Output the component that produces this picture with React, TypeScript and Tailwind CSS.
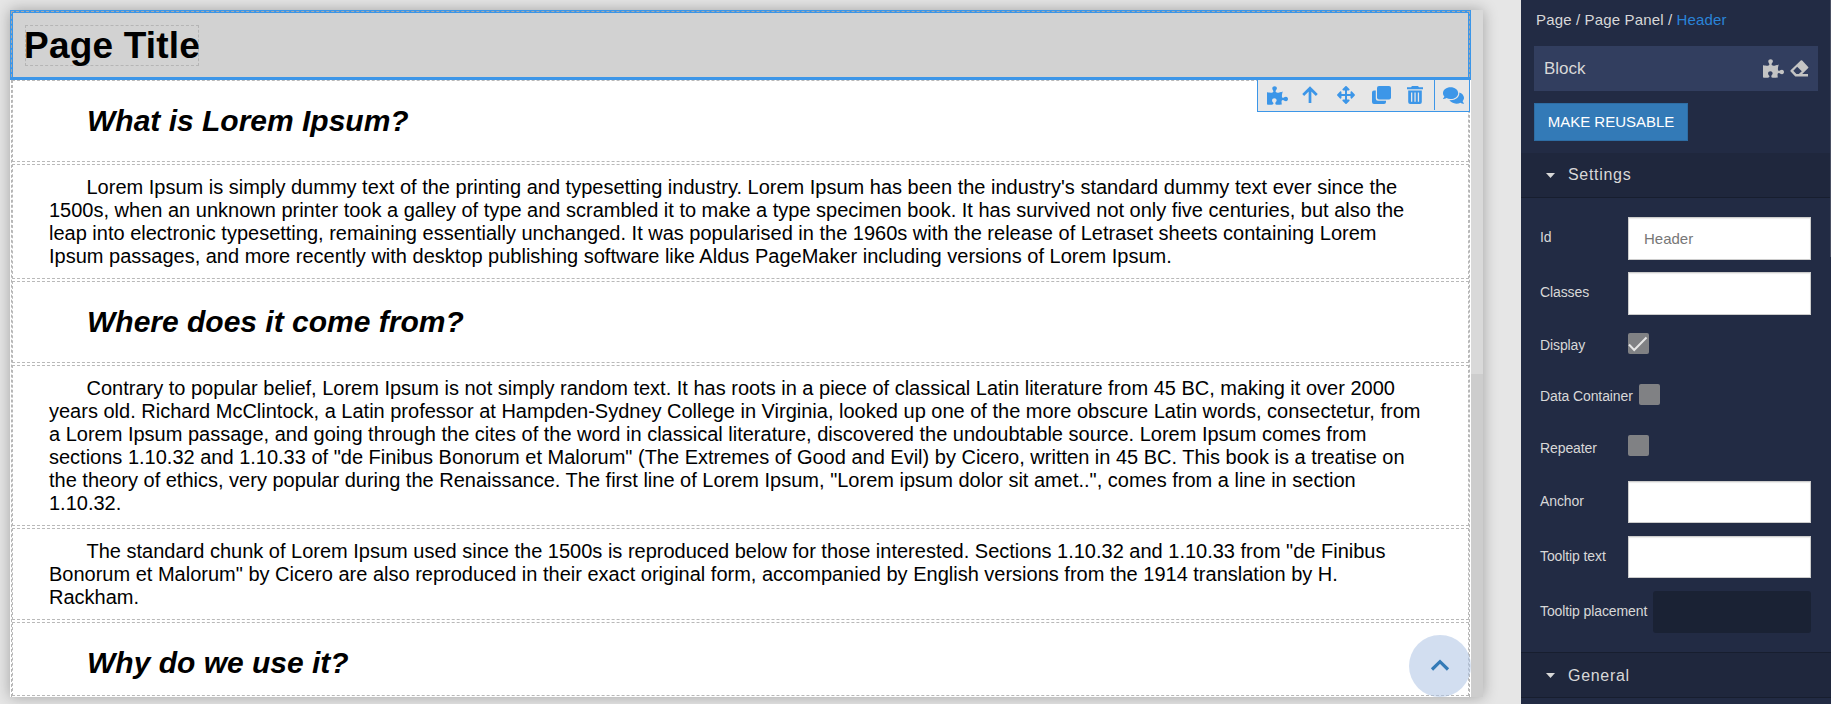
import React from "react";
import { FaPuzzlePiece, FaArrowsAlt, FaComments } from "react-icons/fa";

function Heading({ children, className }: { children: React.ReactNode; className: string }) {
  return (
    <div className={`border border-dashed border-[#b9b9b9] pt-[23px] pl-[74px] ${className}`}>
      <h2 className="text-[30px] leading-[34px] font-bold italic">{children}</h2>
    </div>
  );
}

function Paragraph({ lines, className }: { lines: string[]; className: string }) {
  return (
    <div className={`mt-[2px] border border-dashed border-[#b9b9b9] pl-[36px] ${className}`}>
      <p className="indent-[37.5px] text-[20px] leading-[23px] whitespace-nowrap">
        {lines.map((line) => (
          <React.Fragment key={line}>
            {line}
            <br />
          </React.Fragment>
        ))}
      </p>
    </div>
  );
}

function Field({ label, children, className }: { label: string; children: React.ReactNode; className: string }) {
  return (
    <div className={`flex ${className}`}>
      <label className="w-[88px] shrink-0 text-[14px] leading-[16px] tracking-[-0.1px] whitespace-nowrap">{label}</label>
      {children}
    </div>
  );
}

const inputClass =
  "w-[183px] rounded-none border border-[#cccccc] bg-white px-[15px] text-[15px] text-[#555] placeholder:text-[#777] shadow-[inset_0_1px_1px_rgba(0,0,0,0.08)]";

function Check({ checked, className }: { checked?: boolean; className: string }) {
  return (
    <span className={`block size-[21px] shrink-0 rounded-[2px] bg-[#808184] ${className}`}>
      {checked && (
        <svg viewBox="0 0 21 21" className="size-[21px]" fill="none" stroke="#e6e6e6" strokeWidth="2">
          <path d="M1 11.5 L6.2 17 L18.5 4.5" />
        </svg>
      )}
    </span>
  );
}

function SectionBar({ title, className }: { title: string; className: string }) {
  return (
    <div className={`flex items-center border-b border-[#171e2f] bg-[#1f273d] pl-[25px] ${className}`}>
      <svg width="9" height="5" viewBox="0 0 9 5" fill="#d8d8d8">
        <path d="M0 0H9L4.5 5Z" />
      </svg>
      <span className="ml-[13px] text-[16px] leading-[18px] tracking-[0.7px]">{title}</span>
    </div>
  );
}

function ArrowUpIcon() {
  return (
    <svg width="16" height="18" viewBox="0 0 16 18" fill="none" stroke="currentColor" strokeWidth="2.7">
      <path d="M8 17V2.5M1.2 9L8 2.2L14.8 9" />
    </svg>
  );
}

function CloneIcon() {
  return (
    <svg width="19" height="18" viewBox="0 0 19 18" fill="currentColor">
      <rect x="5" y="0" width="14" height="13.5" rx="2" />
      <path d="M3.8 4.5H2A2 2 0 0 0 0 6.5V16A2 2 0 0 0 2 18H12A2 2 0 0 0 14 16V14.7H6A2.2 2.2 0 0 1 3.8 12.5Z" />
    </svg>
  );
}

function TrashIcon() {
  return (
    <svg width="16" height="18" viewBox="0 0 16 18" fill="currentColor">
      <path d="M5 0H11L12 1.2H16V3.2H0V1.2H4Z" />
      <path
        fillRule="evenodd"
        d="M1.2 4.6H14.8V16A2 2 0 0 1 12.8 18H3.2A2 2 0 0 1 1.2 16ZM4 6.6V15.8H5.3V6.6ZM7.4 6.6V15.8H8.7V6.6ZM10.8 6.6V15.8H12.1V6.6Z"
      />
    </svg>
  );
}

function EraserIcon({ className }: { className: string }) {
  return (
    <svg width="19" height="17" viewBox="0 0 19 17" fill="currentColor" className={className}>
      <path
        fillRule="evenodd"
        d="M11 0.3Q11.6 0.1 12.2 0.6L18.2 6.9Q18.7 7.5 18.2 8.1L12.2 14H18V16.4H5.3L0.6 11.6Q0 10.9 0.6 10.2ZM7.2 6.8L3.3 10.8L6.4 14H8.8L11.8 11.2Z"
      />
    </svg>
  );
}

export default function App() {
  return (
    <div className="flex h-[704px] w-[1831px] overflow-hidden bg-[#e6e6e6] font-['Liberation_Sans',Arial,sans-serif] text-black">
      <main className="w-[1521px] shrink-0 pt-[10px] pl-[10px]">
        <div className="relative flex h-[687px] w-[1473px] shadow-[0_0_14px_rgba(0,0,0,0.3)]">
          <div className="w-[1461px] shrink-0 bg-white">
            <header className="relative h-[70px] border-3 border-[#3c96e8] bg-[#d2d2d2] pt-[12px] pl-[12px]">
              <div className="pointer-events-none absolute -inset-x-[2px] -top-[2px] bottom-0 border-x border-t border-dashed border-[#a9a9a9]" />
              <h1 className="h-[41px] w-[174px] border border-dashed border-[#b5b5b5] text-[37px] leading-[40px] font-bold tracking-[0.2px] whitespace-nowrap">
                <span className="-ml-[2px]">Page Title</span>
              </h1>
            </header>
            <div className="mx-px h-[617px] overflow-hidden border-x border-dashed border-[#b5b5b5]">
              <Heading className="h-[82px]">What is Lorem Ipsum?</Heading>
              <Paragraph
                className="h-[115px] pt-[11px]"
                lines={[
                  "Lorem Ipsum is simply dummy text of the printing and typesetting industry. Lorem Ipsum has been the industry's standard dummy text ever since the",
                  "1500s, when an unknown printer took a galley of type and scrambled it to make a type specimen book. It has survived not only five centuries, but also the",
                  "leap into electronic typesetting, remaining essentially unchanged. It was popularised in the 1960s with the release of Letraset sheets containing Lorem",
                  "Ipsum passages, and more recently with desktop publishing software like Aldus PageMaker including versions of Lorem Ipsum.",
                ]}
              />
              <Heading className="mt-[2px] h-[82px]">Where does it come from?</Heading>
              <Paragraph
                className="h-[161px] pt-[11px]"
                lines={[
                  "Contrary to popular belief, Lorem Ipsum is not simply random text. It has roots in a piece of classical Latin literature from 45 BC, making it over 2000",
                  "years old. Richard McClintock, a Latin professor at Hampden-Sydney College in Virginia, looked up one of the more obscure Latin words, consectetur, from",
                  "a Lorem Ipsum passage, and going through the cites of the word in classical literature, discovered the undoubtable source. Lorem Ipsum comes from",
                  "sections 1.10.32 and 1.10.33 of \"de Finibus Bonorum et Malorum\" (The Extremes of Good and Evil) by Cicero, written in 45 BC. This book is a treatise on",
                  "the theory of ethics, very popular during the Renaissance. The first line of Lorem Ipsum, \"Lorem ipsum dolor sit amet..\", comes from a line in section",
                  "1.10.32.",
                ]}
              />
              <Paragraph
                className="h-[92px] pt-[11px]"
                lines={[
                  "The standard chunk of Lorem Ipsum used since the 1500s is reproduced below for those interested. Sections 1.10.32 and 1.10.33 from \"de Finibus",
                  "Bonorum et Malorum\" by Cicero are also reproduced in their exact original form, accompanied by English versions from the 1914 translation by H.",
                  "Rackham.",
                ]}
              />
              <Heading className="mt-[2px] h-[74px]">Why do we use it?</Heading>
            </div>
          </div>
          <div className="w-[12px] shrink-0 bg-[#cdcdcd]">
            <div className="h-[364px] bg-[#d9d9d9]" />
          </div>
          <div className="absolute top-[69px] left-[1247px] flex h-[33px] w-[213px] border border-[#3c96e8] bg-[#e7e7e7] text-[#3c96e8]">
            <div className="flex h-[30px] w-[177px] items-center border-r border-[#3c96e8] pl-[9px]">
              <FaPuzzlePiece size={21} />
              <span className="ml-[14px]"><ArrowUpIcon /></span>
              <FaArrowsAlt size={18} className="ml-[19px]" />
              <span className="ml-[17px]"><CloneIcon /></span>
              <span className="ml-[16px]"><TrashIcon /></span>
            </div>
            <FaComments size={21} className="mt-[5px] ml-[8px]" />
          </div>
          <div className="absolute top-[625px] left-[1399px] flex size-[62px] items-center justify-center rounded-full bg-[#adc2e4]/55">
            <svg width="20" height="14" viewBox="0 0 20 14" fill="none" stroke="#337ab7" strokeWidth="3.2">
              <path d="M2 10.5L10 2.7L18 10.5" />
            </svg>
          </div>
        </div>
      </main>
      <aside className="relative flex w-[310px] shrink-0 flex-col bg-[#222b44] text-[#d8d8d8]">
        <div className="absolute top-0 right-0 h-[257px] w-px bg-[#4a5063]" />
        <nav className="h-[46px] pt-[11px] pl-[15px] text-[15px] leading-[18px] tracking-[0.15px] whitespace-pre">
          Page / Page Panel / <span className="text-[#2a84d8]">Header</span>
        </nav>
        <div className="mx-[13px] flex h-[45px] w-[284px] items-center bg-[#323e5f] pr-[9px] pl-[10px] text-[17px]">
          Block
          <FaPuzzlePiece size={21} className="ml-auto text-[#c4c4c4]" />
          <EraserIcon className="ml-[6px] text-[#c4c4c4]" />
        </div>
        <button className="mt-[12px] ml-[13px] h-[38px] w-[154px] border border-[#2e6da4] bg-[#337ab7] text-[15px] text-white">
          MAKE REUSABLE
        </button>
        <SectionBar title="Settings" className="mt-[12px] h-[45px]" />
        <div className="h-[454px] shrink-0 pt-[19px] pr-[20px] pl-[19px]">
          <Field label="Id" className="h-[55px] [&>label]:pt-[12px]">
            <input placeholder="Header" className={`h-[43px] ${inputClass}`} />
          </Field>
          <Field label="Classes" className="h-[55px] [&>label]:pt-[12px]">
            <input className={`h-[43px] ${inputClass}`} />
          </Field>
          <Field label="Display" className="h-[51px] [&>label]:pt-[10px]">
            <Check checked className="mt-[6px]" />
          </Field>
          <Field label="Data Container" className="h-[51px] [&>label]:pt-[10px]">
            <Check className="mt-[6px] ml-[11px]" />
          </Field>
          <Field label="Repeater" className="h-[52px] [&>label]:pt-[11px]">
            <Check className="mt-[6px]" />
          </Field>
          <Field label="Anchor" className="h-[55px] [&>label]:pt-[12px]">
            <input className={`h-[42px] ${inputClass}`} />
          </Field>
          <Field label="Tooltip text" className="h-[55px] [&>label]:pt-[12px]">
            <input className={`h-[42px] ${inputClass}`} />
          </Field>
          <Field label="Tooltip placement" className="h-[42px] [&>label]:pt-[12px]">
            <div className="ml-auto h-[42px] w-[158px] rounded-[3px] bg-[#1a2234]" />
          </Field>
        </div>
        <SectionBar title="General" className="h-[46px] shrink-0 border-t pt-px" />
      </aside>
    </div>
  );
}
